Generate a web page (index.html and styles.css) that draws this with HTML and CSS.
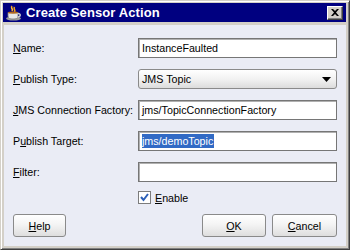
FILE: index.html
```html
<!DOCTYPE html>
<html>
<head>
<meta charset="utf-8">
<link rel="stylesheet" href="styles.css">
</head>
<body>
<div class="window">
  <div class="titlebar">
    <svg class="app-icon" width="17" height="16" viewBox="0 0 17 16">
      <path d="M7 1 C5 3 9 4 7 6 M9.5 2 C8 4 11 5 9.5 7" stroke="#f0a020" stroke-width="1.6" fill="none"/>
      <path d="M6.5 2.5 C6 3.5 8 4 7 5.5" stroke="#ffe060" stroke-width="0.8" fill="none"/>
      <ellipse cx="8.5" cy="13.5" rx="7.5" ry="2" fill="#9a9a9a"/>
      <path d="M3 7.5 H13 V11 C13 13.5 11 14 8 14 C5 14 3 13.5 3 11 Z" fill="#e8e8e8" stroke="#7a7a7a" stroke-width="0.8"/>
      <ellipse cx="8" cy="7.6" rx="5" ry="1.2" fill="#b06820"/>
      <path d="M13 8.5 C16 8.5 16 12 12.5 12" stroke="#d0d0d0" stroke-width="1.5" fill="none"/>
    </svg>
    <span class="title">Create Sensor Action</span>
    <span class="close">
      <svg width="8" height="7" viewBox="0 0 8 7"><path d="M0 0h2l2 2 2-2h2L5 3.5 8 7H6L4 5 2 7H0l3-3.5z" fill="#000"/></svg>
    </span>
  </div>
  <div class="content">
    <div class="form">
      <span class="lbl"><u>N</u>ame:</span>
      <div class="field">InstanceFaulted</div>
      <span class="lbl"><u>P</u>ublish Type:</span>
      <div class="combo"><span>JMS Topic</span>
        <svg class="arrow" width="9" height="5" viewBox="0 0 9 5"><path d="M0 0H9L4.5 5z" fill="#000"/></svg>
      </div>
      <span class="lbl"><u>J</u>MS Connection Factory:</span>
      <div class="field">jms/TopicConnectionFactory</div>
      <span class="lbl">P<u>u</u>blish Target:</span>
      <div class="field"><span class="sel">jms/demoTopic</span></div>
      <span class="lbl"><u>F</u>ilter:</span>
      <div class="field"></div>
    </div>
    <div class="check-row">
      <span class="checkbox">
        <svg width="9" height="9" viewBox="0 0 9 9"><path d="M1 4 L3.5 7 L8 1" stroke="#2b5fb8" stroke-width="2" fill="none"/></svg>
      </span>
      <span class="check-label"><u>E</u>nable</span>
    </div>
    <div class="buttons">
      <button class="btn btn-help"><u>H</u>elp</button>
      <span class="spacer"></span>
      <button class="btn btn-ok"><u>O</u>K</button>
      <button class="btn btn-cancel"><u>C</u>ancel</button>
    </div>
  </div>
</div>
</body>
</html>
```
FILE: styles.css
```css
html, body {
  margin: 0;
  padding: 0;
  background: #d4d0c8;
}
body {
  font-family: "Liberation Sans", Arial, sans-serif;
  font-size: 10.7px;
  color: #000;
}
.window {
  width: 350px;
  height: 250px;
  box-sizing: border-box;
  background: #d4d0c8;
  border: 1px solid;
  border-color: #d4d0c8 #404040 #404040 #d4d0c8;
  box-shadow: inset 1px 1px 0 #fff, inset -1px -1px 0 #808080;
  padding: 2px 3px 3px 2px;
  display: flex;
  flex-direction: column;
}
.titlebar {
  height: 19px;
  background: #000080;
  display: flex;
  align-items: center;
  padding: 0 2px 0 2px;
  flex: none;
}
.app-icon {
  flex: none;
  margin-right: 4px;
}
.title {
  color: #fff;
  font-weight: bold;
  font-size: 13px;
  flex: 1;
  letter-spacing: 0.1px;
}
.close {
  width: 16px;
  height: 14px;
  box-sizing: border-box;
  background: #d4d0c8;
  border: 1px solid;
  border-color: #fff #404040 #404040 #fff;
  box-shadow: inset -1px -1px 0 #808080;
  display: flex;
  align-items: center;
  justify-content: center;
  margin-right: 1px;
}
.content {
  flex: 1;
  margin-top: 3px;
  margin-left: 1px;
  background: #eaecf5;
  padding: 13px 9px 0 9px;
  display: flex;
  flex-direction: column;
}
.form {
  display: grid;
  grid-template-columns: 125px 1fr;
  row-gap: 11px;
  align-items: center;
}
.lbl {
  white-space: nowrap;
}
.field {
  height: 20px;
  box-sizing: border-box;
  background: #fff;
  border: 1px solid #767676;
  box-shadow: inset 1px 1px 0 #b0b0b0;
  display: flex;
  align-items: center;
  padding-left: 3px;
  white-space: nowrap;
}
.sel {
  background: #316ac5;
  color: #fff;
  line-height: 14px;
  padding-right: 1px;
}
.combo {
  height: 20px;
  box-sizing: border-box;
  border: 1px solid #8a8a8a;
  border-radius: 3px;
  background: linear-gradient(#ffffff, #f2f2f2 50%, #dcdcdc);
  display: flex;
  align-items: center;
  justify-content: space-between;
  padding: 0 5px 0 3px;
}
.check-row {
  display: flex;
  align-items: center;
  margin-top: 9px;
  margin-left: 125px;
  height: 13px;
}
.checkbox {
  width: 13px;
  height: 13px;
  box-sizing: border-box;
  border: 1px solid #7c7c7c;
  background: #fff;
  display: flex;
  align-items: center;
  justify-content: center;
  margin-right: 4px;
}
.buttons {
  display: flex;
  margin-top: 10px;
  gap: 6px;
}
.spacer {
  flex: 1;
}
.btn {
  height: 23px;
  box-sizing: border-box;
  border: 1px solid #8a8a8a;
  border-radius: 3px;
  background: linear-gradient(#ffffff, #f4f4f4 45%, #dedede);
  font-family: inherit;
  font-size: inherit;
  color: #000;
  padding: 0;
}
.btn-help { width: 53px; }
.btn-ok { width: 64px; }
.btn-cancel { width: 65px; }
```
